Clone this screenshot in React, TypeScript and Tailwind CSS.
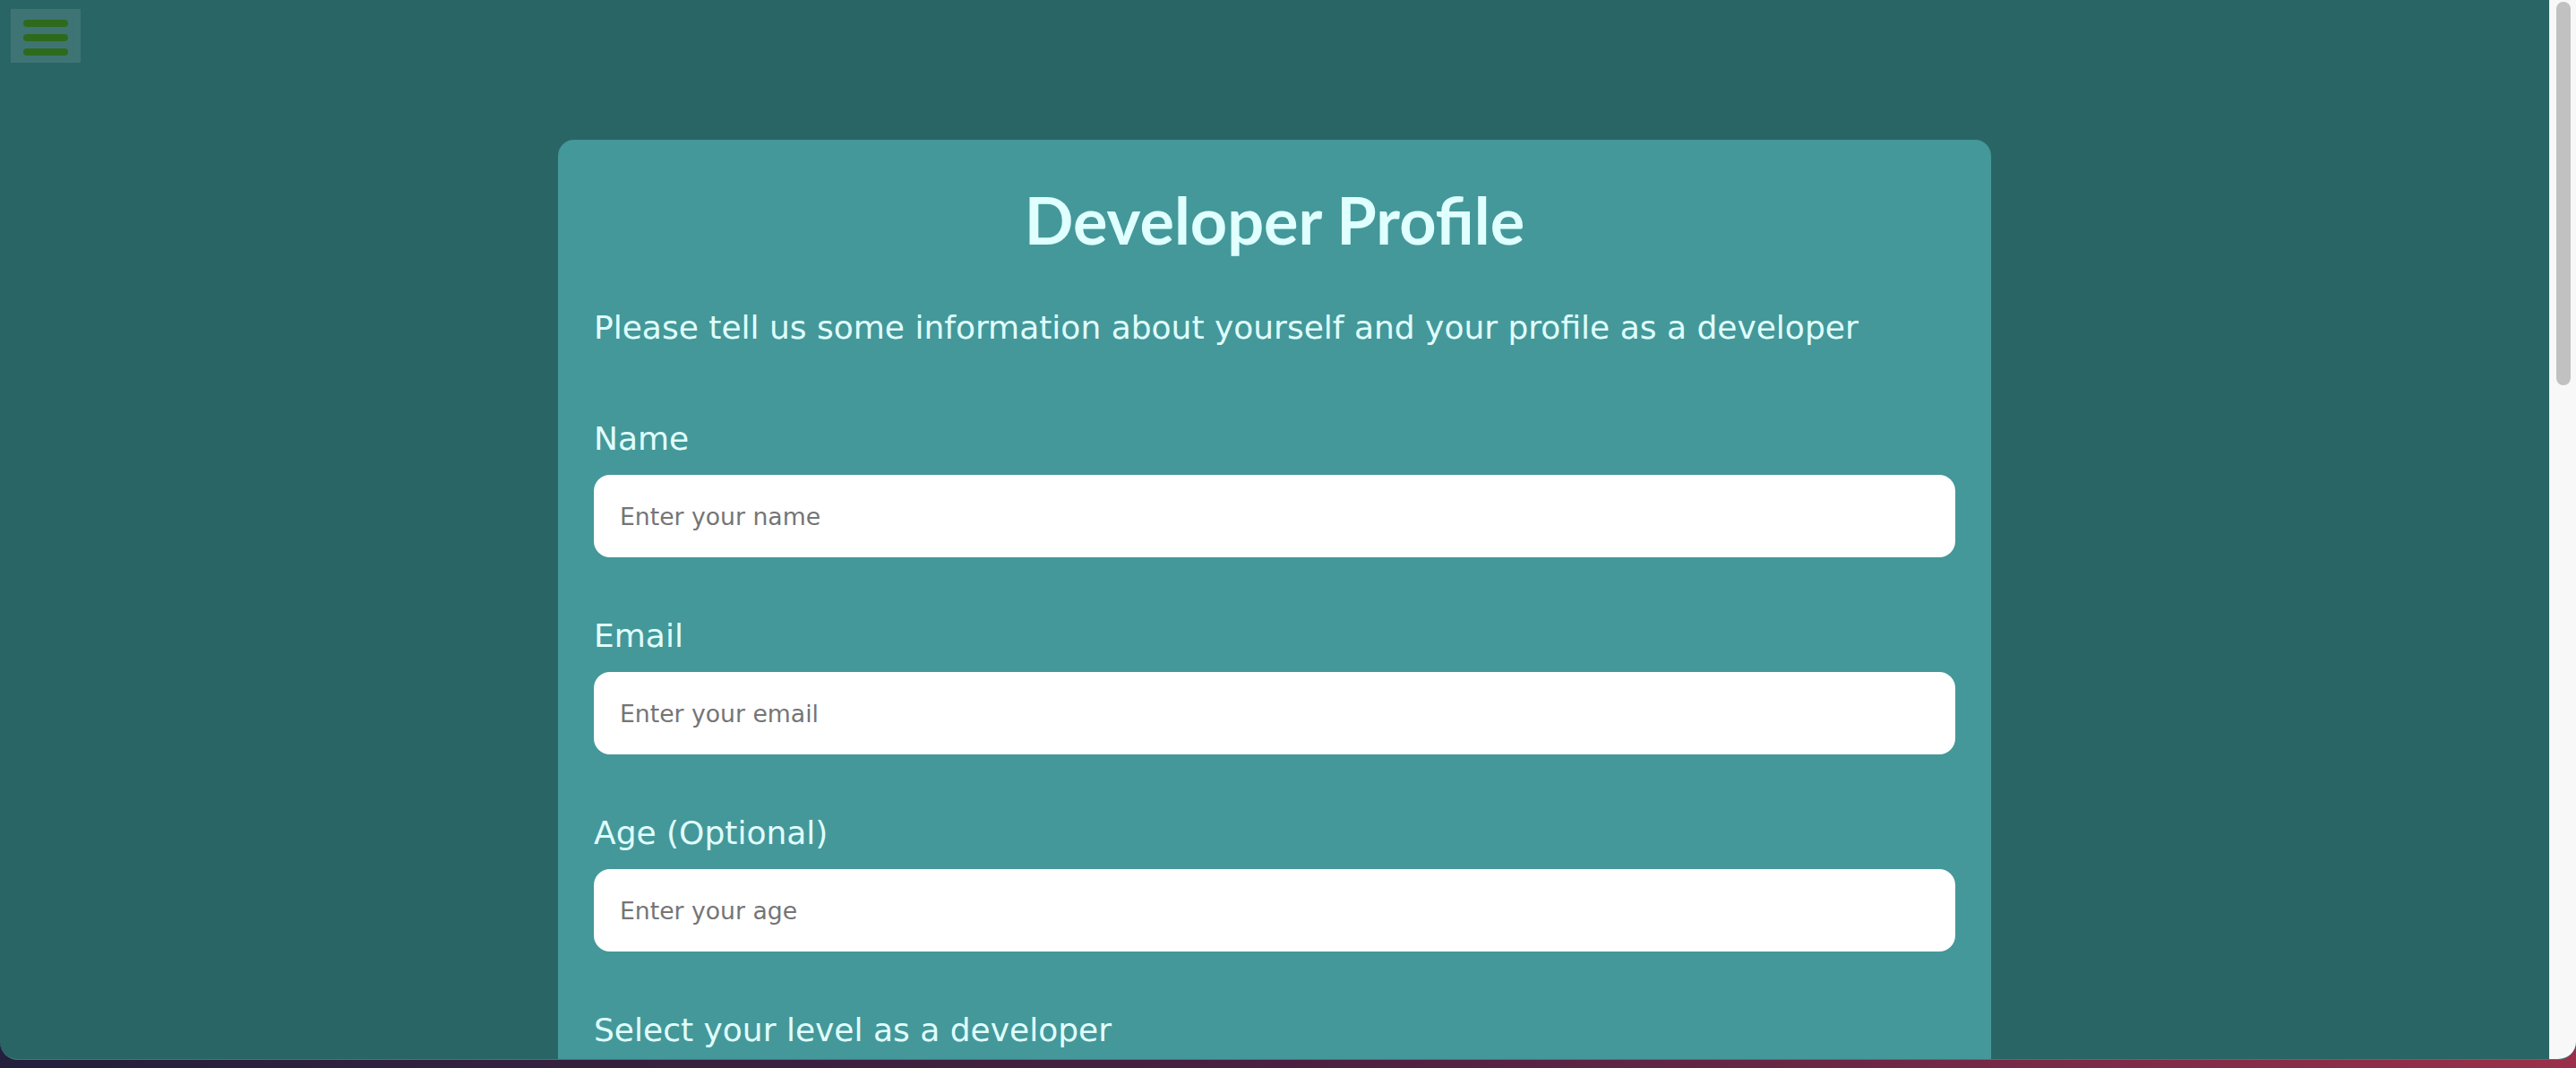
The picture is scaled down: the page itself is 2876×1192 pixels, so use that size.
import { useState } from "react";

const fields = [
  { id: "name", label: "Name", type: "text", placeholder: "Enter your name" },
  { id: "email", label: "Email", type: "email", placeholder: "Enter your email" },
  { id: "age", label: "Age (Optional)", type: "text", placeholder: "Enter your age" },
];

export default function App() {
  const [values, setValues] = useState<Record<string, string>>({});

  return (
    <div className="h-[1192px] w-full overflow-hidden bg-linear-to-r from-[#231f3c] via-[#4b1f41] to-[#9b2f4a]">
      <div className="relative flex h-[1183px] overflow-hidden rounded-b-[20px] border-b border-[#3b7b7b] bg-[#2a6566]">
        <button
          type="button"
          aria-label="Open menu"
          className="absolute left-[12px] top-[10px] flex w-[78px] flex-col gap-[8px] bg-white/10 px-[14px] pb-[8px] pt-[12px]"
        >
          <span className="h-[8px] w-[50px] rounded-full bg-[#2e6a1b]" />
          <span className="h-[8px] w-[50px] rounded-full bg-[#2e6a1b]" />
          <span className="h-[8px] w-[50px] rounded-full bg-[#2e6a1b]" />
        </button>

        <main className="flex-1 overflow-hidden pt-[156px] font-['DejaVu_Sans',Verdana,sans-serif]">
          <form className="mx-auto w-[1600px] rounded-[18px] bg-[#449899] px-[40px] pb-[240px] pt-[53px] text-[#e0ffff]">
            <h1 className="text-center font-['Lato',sans-serif] text-[72px] font-bold leading-[72px]">
              Developer Profile
            </h1>
            <p className="mt-[63px] text-[36px] leading-[44px]">
              Please tell us some information about yourself and your profile as a developer
            </p>

            <div className="mt-[80px] flex flex-col gap-[66px]">
              {fields.map((field) => (
                <div key={field.id}>
                  <label htmlFor={field.id} className="block text-[36px] leading-[44px]">
                    {field.label}
                  </label>
                  <input
                    id={field.id}
                    type={field.type}
                    placeholder={field.placeholder}
                    value={values[field.id] ?? ""}
                    onChange={(e) => setValues({ ...values, [field.id]: e.target.value })}
                    className="mt-[18px] block h-[92px] w-full rounded-[18px] bg-white pl-[29px] text-[26.67px] text-[#222] outline-none placeholder:text-[#757575]"
                  />
                </div>
              ))}

              <p className="text-[36px] leading-[44px]">Select your level as a developer</p>
            </div>
          </form>
        </main>

        <div className="w-[30px] shrink-0 border-l border-[#ececec] bg-[#f8f8f8] pl-[7px] pt-[2px]">
          <div className="h-[428px] w-[16px] rounded-full bg-[#c1c1c1]" />
        </div>
      </div>
    </div>
  );
}
